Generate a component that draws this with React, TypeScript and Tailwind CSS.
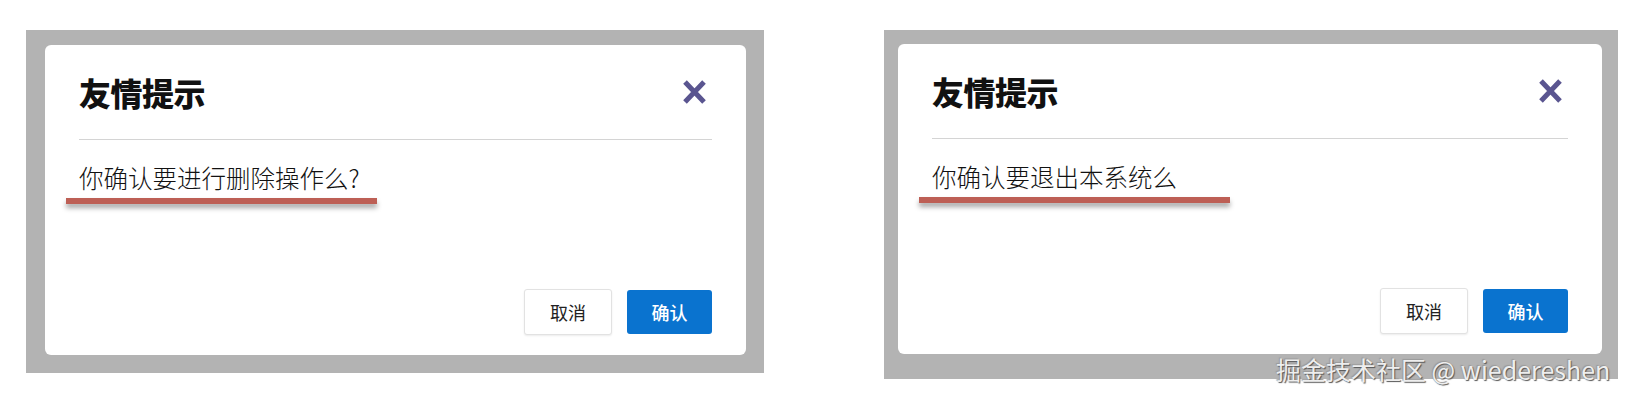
import React from "react";

const CJK = '"Noto Sans CJK SC", "Noto Sans", sans-serif';

function CloseIcon() {
  return (
    <svg width="25" height="24" viewBox="0 0 25 24" className="mr-[5px]">
      <path d="M3 2 L22 22 M22 2 L3 22" stroke="#5a5590" strokeWidth="5" strokeLinecap="butt" fill="none" />
    </svg>
  );
}

function Dialog({ text }: { text: string }) {
  return (
    <div className="flex h-[310px] flex-col rounded-[6px] bg-white" style={{ fontFamily: CJK }}>
      <div className="mx-[34px] flex h-[95px] items-center justify-between border-b border-[#d4d4d4]">
        <span className="text-[32px] font-black leading-none tracking-[-0.5px] text-[#111]">友情提示</span>
        <CloseIcon />
      </div>
      <div className="flex-1 px-[34px] pt-[22px]">
        <div className="text-[24.5px] font-light leading-[32px] text-[#111]">{text}</div>
        <div className="ml-[-13px] mt-[4px] h-[6px] w-[311px] bg-[#bd5f55] shadow-[0_4px_5px_rgba(0,0,0,0.35)]" />
      </div>
      <div className="flex items-center justify-end gap-[15px] px-[34px] pb-[20px]">
        <button className="flex h-[46px] w-[88px] items-center justify-center rounded-[3px] border border-[#e2e2e2] bg-white text-[18px] text-[#222] shadow-[0_1px_2px_rgba(0,0,0,0.08)]">
          取消
        </button>
        <button className="flex h-[44px] w-[85px] items-center justify-center rounded-[3px] bg-[#0a73cf] text-[18px] font-medium text-white">
          确认
        </button>
      </div>
    </div>
  );
}

export default function App() {
  return (
    <div className="relative h-[403px] w-[1630px] overflow-hidden bg-white">
      <div className="flex items-start pl-[26px] pt-[30px]">
        <div className="h-[343px] w-[738px] bg-[#b3b3b3] pb-[18px] pl-[19px] pr-[18px] pt-[15px]">
          <Dialog text="你确认要进行删除操作么?" />
        </div>
        <div className="ml-[120px] h-[349px] w-[734px] bg-[#b3b3b3] pb-[25px] pl-[14px] pr-[16px] pt-[14px]">
          <Dialog text="你确认要退出本系统么" />
        </div>
      </div>
      <div
        className="absolute left-[1276px] top-[353px] whitespace-nowrap text-[25px] leading-[32px] text-[#eeeeee] [text-shadow:1px_1px_1px_#555,-1px_-1px_1px_#999]"
        style={{ fontFamily: CJK }}
      >
        掘金技术社区 @ wiedereshen
      </div>
    </div>
  );
}
